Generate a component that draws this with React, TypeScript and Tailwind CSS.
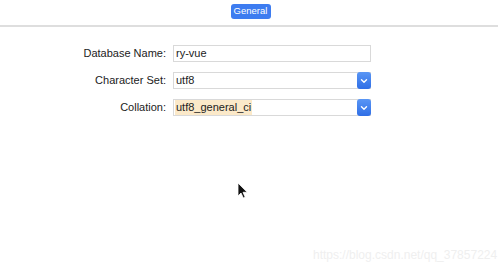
import React from "react";

function Chevron() {
  return (
    <svg width="8" height="6" viewBox="0 0 8 6" fill="none">
      <path d="M1.5 1.8 L4 4.2 L6.5 1.8" stroke="white" strokeWidth="1.4" strokeLinecap="round" strokeLinejoin="round" />
    </svg>
  );
}

function Select({ value, highlight }: { value: string; highlight?: boolean }) {
  return (
    <div className="flex h-[17px] w-[198px] items-center border border-[#d9d9d9] bg-white">
      <div className="flex flex-1 items-center pl-[1px]">
        <span className={"px-[1px] leading-[15px] " + (highlight ? "bg-[#fbe9c9]" : "")}>{value}</span>
      </div>
      <div className="flex h-[17px] w-[14px] -mr-px -my-px items-center justify-center rounded-[3px] bg-gradient-to-b from-[#5a96f5] to-[#2f6ee6]">
        <Chevron />
      </div>
    </div>
  );
}

export default function App() {
  return (
    <div
      className="relative h-[266px] w-[498px] overflow-hidden bg-white text-[11px] text-[#222]"
      style={{ fontFamily: '"Liberation Sans", Arial, sans-serif' }}
    >
      <div className="flex h-[25px] justify-center pt-[4px] pl-[3px]">
        <div className="flex h-[15px] w-[40px] items-center justify-center rounded-[3px] bg-[#3d7cf0] text-[9.5px] text-white">
          General
        </div>
      </div>
      <div className="h-[2px] bg-[#dedede]" />
      <div className="mt-[18px] grid grid-cols-[166px_198px] items-center gap-x-[7px] gap-y-[10px]">
        <div className="text-right">Database Name:</div>
        <div className="flex h-[17px] items-center border border-[#d9d9d9] bg-white pl-[2px]">ry-vue</div>
        <div className="text-right">Character Set:</div>
        <Select value="utf8" />
        <div className="text-right">Collation:</div>
        <Select value="utf8_general_ci" highlight />
      </div>
      <svg className="absolute left-[237px] top-[182px]" width="12" height="17" viewBox="0 0 12 17">
        <path d="M1 1 L1 14 L4 11 L6.3 16 L8.2 15.2 L6 10.3 L10.2 10.3 Z" fill="#111" stroke="white" strokeWidth="0.8" />
      </svg>
      <div className="absolute left-[313px] top-[246px] text-[12px] text-[#efefef]">https://blog.csdn.net/qq_37857224</div>
    </div>
  );
}
